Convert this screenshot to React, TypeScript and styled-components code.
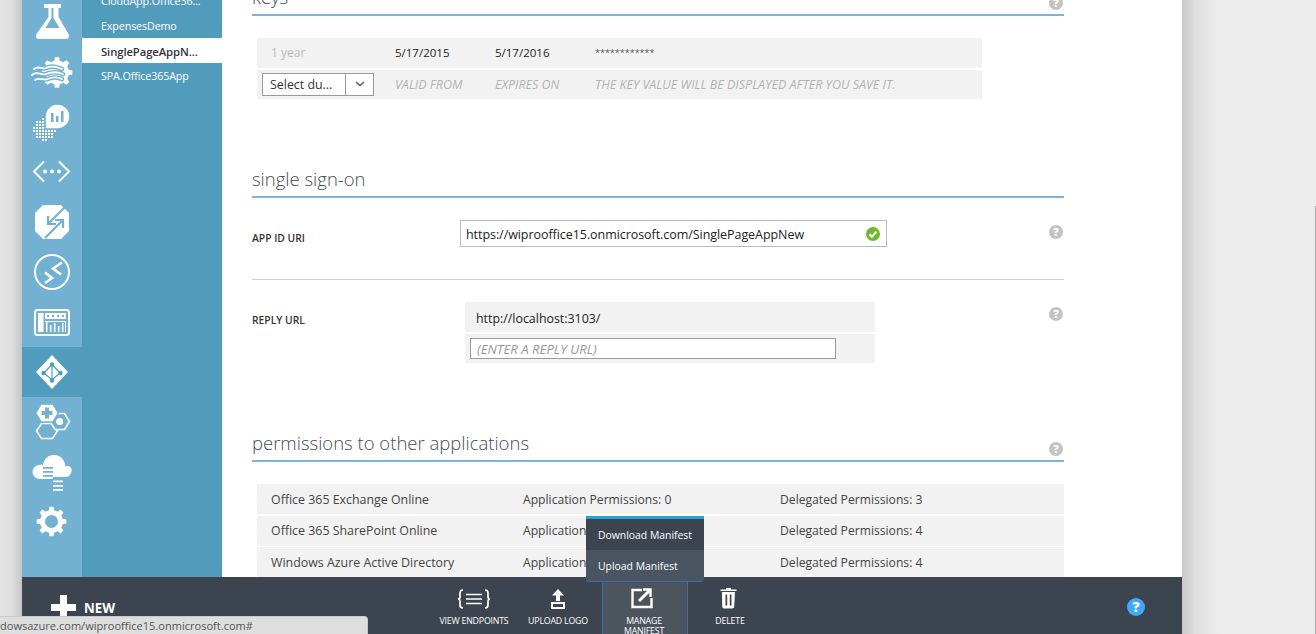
import styled, { createGlobalStyle } from "styled-components";

const GlobalStyle = createGlobalStyle`
html, body {
  margin: 0;
  padding: 0;
  background: #ececec;
}
* {
  box-sizing: border-box;
}
`

const gearPath = (cx: number, cy: number, outer: number, inner: number, hole: number, teeth = 8) => {
    let d = ""
    for (let i = 0; i < teeth; i++) {
        const step = (Math.PI * 2) / teeth
        const a = i * step - Math.PI / 2
        const pts = [
            [inner, a - step * 0.3],
            [outer, a - step * 0.17],
            [outer, a + step * 0.17],
            [inner, a + step * 0.3],
        ]
        pts.forEach(([r, t], j) => {
            const x = (cx + r * Math.cos(t)).toFixed(2)
            const y = (cy + r * Math.sin(t)).toFixed(2)
            d += `${i === 0 && j === 0 ? "M" : "L"}${x} ${y}`
        })
    }
    d += "Z"
    if (hole > 0) {
        d += ` M${cx - hole} ${cy}a${hole} ${hole} 0 1 0 ${hole * 2} 0a${hole} ${hole} 0 1 0 ${-hole * 2} 0Z`
    }
    return d
}

const Svg = (props: any) => (
    <svg width="50" height="50" viewBox="0 0 50 50" fill="#fff" {...props} />
)

const FlaskIcon = () => (
    <Svg>
        <path fillRule="evenodd" d="M17 7h17v4h-2.500v9l10 17q2 5-3 5H12.500q-5 0-3-5l12-17v-9H17z M24.500 11v10l-6 10h14l-6-10V11z" />
    </Svg>
)

const wavePath = "M5 28c5-5 9 1 14-1s10-3 17 0M7 22c5-4 8 1 12-1s9-2 16 1M8 33c5-3 9 1 13-1s9-2 14 0"

const WavesIcon = () => (
    <Svg>
        <path d={gearPath(30, 25.5, 15.5, 12, 0)} />
        <g fill="none" strokeLinecap="round">
            <path d={wavePath} stroke="#72b1d2" strokeWidth="4.6" />
            <path d={wavePath} stroke="#fff" strokeWidth="1.8" />
        </g>
    </Svg>
)

const dots: number[][] = []
for (let x = 6; x <= 28; x += 3) {
    for (let y = 21; y <= 43; y += 3) {
        if ((x - 16.5) ** 2 + (y - 31.5) ** 2 <= 125) dots.push([x, y])
    }
}

const AnalyticsIcon = () => (
    <Svg>
        {dots.map(([x, y]) => <rect key={`${x}-${y}`} x={x} y={y} width="2" height="2" />)}
        <path d="M30.500 7a12.500 12.500 0 1 1 0 25H18V19.500A12.500 12.500 0 0 1 30.500 7z" stroke="#72b1d2" strokeWidth="1.5" />
        <path fill="#72b1d2" d="M24 16h2.500v9H24zM29 19h2.500v6H29zM34 14h2.500v11H34z" />
    </Svg>
)

const CodeIcon = () => (
    <Svg>
        <path d="M17 14.500L7 24.500l10 10M32 14.500l10 10-10 10" fill="none" stroke="#fff" strokeWidth="2" />
        <circle cx="18" cy="24.500" r="2" />
        <circle cx="25" cy="24.500" r="2" />
        <circle cx="32" cy="24.500" r="2" />
    </Svg>
)

const TrafficIcon = () => (
    <Svg>
        <path d="M16 8h18l8 8v18l-8 8H16l-8-8V16z" />
        <g fill="none" stroke="#72b1d2" strokeWidth="2.200">
            <path d="M21 27l17-17M21 19v8h8" />
            <path d="M36 23L18 41M28 23h8v8" />
        </g>
    </Svg>
)

const RemoteIcon = () => (
    <Svg>
        <circle cx="25" cy="25" r="17" fill="none" stroke="#fff" strokeWidth="2" />
        <path d="M18 25.500l7 5.500-7 5M35 15.500l-9 6 8 6" fill="none" stroke="#fff" strokeWidth="2.600" />
    </Svg>
)

const PanelIcon = () => (
    <Svg>
        <rect x="8" y="13" width="34" height="25" rx="2.500" fill="none" stroke="#fff" strokeWidth="2" />
        <rect x="11" y="16" width="5.500" height="19" />
        <rect x="18" y="16" width="21" height="6" />
        <path fill="#72b1d2" d="M20 18h2v2h-2zM25 18h2v2h-2zM30 18h2v2h-2zM35 18h2v2h-2z" />
        <path d="M18 24h21v1H18zM19 25h1.500v10H19zM23 28h1.500v7H23zM27 26h1.500v9H27zM31 29h1.500v6H31zM35 26h1.500v9H35zM38 25h1v10h-1z" />
    </Svg>
)

const DirectoryIcon = () => (
    <Svg>
        <path d="M25 8l16 17-16 17L9 25z" />
        <g fill="none" stroke="#519bbd" strokeWidth="1.200">
            <path d="M25 17.500L17 26l8 7 8-7zM25 17.500V33" />
        </g>
        <g fill="#519bbd">
            <circle cx="25" cy="17.500" r="2.200" />
            <circle cx="16.500" cy="26" r="2.200" />
            <circle cx="33.500" cy="26" r="2.200" />
            <circle cx="25" cy="33.500" r="2.200" />
        </g>
    </Svg>
)

const HexIcon = () => (
    <Svg>
        <path d="M14.500 26.500h11l5 7.500-5 7.500h-11l-5-7.500z" fill="none" stroke="#fff" strokeWidth="1.600" />
        <path d="M28 16.500h9.500l5 8-5 8H28l-5-8z" fill="#72b1d2" stroke="#fff" strokeWidth="1.600" />
        <circle cx="32.700" cy="24.500" r="3.500" />
        <path d="M14 7h12l5.500 9L26 25H14L8.500 16z" stroke="#72b1d2" strokeWidth="1.500" />
        <path d="M18 10.500h4v3.500h3.500v4H22v3.500h-4V18h-3.500v-4H18z" fill="#72b1d2" />
    </Svg>
)

const CloudIcon = () => (
    <Svg>
        <path d="M13 32a7 7 0 0 1-1-14q2-1 4 0c1-7 6-10 11-10 7 0 11 5 11.500 12q2-2 4-.500c2 1 2.500 3 2 5s-2.500 5.500-5 5.500H26v2z" />
        <path fill="#72b1d2" d="M16 20h10v1.800H16zM16 24h10v1.800H16zM16 28h10v1.800H16z" />
        <path d="M26 33.500h10v1.800H26zM26 38h10v1.800H26zM26 42h10v1.800H26z" />
    </Svg>
)

const GearIcon = () => (
    <Svg>
        <path fillRule="evenodd" d={gearPath(24.5, 24.5, 15, 11.5, 6.5)} />
    </Svg>
)

const railItems = [
    { id: "flask", Icon: FlaskIcon },
    { id: "waves", Icon: WavesIcon },
    { id: "analytics", Icon: AnalyticsIcon },
    { id: "code", Icon: CodeIcon },
    { id: "traffic", Icon: TrafficIcon },
    { id: "remote", Icon: RemoteIcon },
    { id: "panel", Icon: PanelIcon },
    { id: "directory", Icon: DirectoryIcon, active: true },
    { id: "hex", Icon: HexIcon },
    { id: "cloud", Icon: CloudIcon },
    { id: "gear", Icon: GearIcon },
]

const subItems = ["CloudApp.Office36...", "ExpensesDemo", "SinglePageAppN...", "SPA.Office365App"]

const permissions = [
    ["Office 365 Exchange Online", "Application Permissions: 0", "Delegated Permissions: 3"],
    ["Office 365 SharePoint Online", "Application Permissions: 0", "Delegated Permissions: 4"],
    ["Windows Azure Active Directory", "Application Permissions: 0", "Delegated Permissions: 4"],
]

const App = () => {
    return (
        <Page>
            <GlobalStyle />
            <LeftGutter />
            <Shell>
                <Upper>
                    <Rail>
                        {railItems.map(({ id, Icon, active }) => (
                            <RailItem key={id} $active={active}><Icon /></RailItem>
                        ))}
                    </Rail>
                    <SubNav>
                        {subItems.map((item, i) => (
                            <SubItem key={item} $active={i === 2}>{item}</SubItem>
                        ))}
                    </SubNav>
                    <Content>
                        <SectionHead>
                            <HeadTitle>keys</HeadTitle>
                            <Help>?</Help>
                        </SectionHead>
                        <KeysTable>
                            <KeysRow>
                                <Muted>1 year</Muted>
                                <Cell>5/17/2015</Cell>
                                <Cell>5/17/2016</Cell>
                                <Stars>************</Stars>
                            </KeysRow>
                            <KeysRow>
                                <SelectBox>
                                    <SelectText>Select du...</SelectText>
                                    <SelectArrow>
                                        <svg width="10" height="6" viewBox="0 0 10 6"><path d="M1 1l4 3.500L9 1" fill="none" stroke="#555" strokeWidth="1.500" /></svg>
                                    </SelectArrow>
                                </SelectBox>
                                <Hint>VALID FROM</Hint>
                                <Hint>EXPIRES ON</Hint>
                                <Hint>THE KEY VALUE WILL BE DISPLAYED AFTER YOU SAVE IT.</Hint>
                            </KeysRow>
                        </KeysTable>

                        <SectionHead $gap={59}>
                            <HeadTitle>single sign-on</HeadTitle>
                        </SectionHead>
                        <FormRow>
                            <FormLabel $width={208}>APP ID URI</FormLabel>
                            <UriField>
                                <span>https://wiprooffice15.onmicrosoft.com/SinglePageAppNew</span>
                                <svg width="14" height="14" viewBox="0 0 14 14">
                                    <circle cx="7" cy="7" r="7" fill="#6fb92d" />
                                    <path d="M3.500 7.200l2.500 2.500 4.500-5" fill="none" stroke="#fff" strokeWidth="2" />
                                </svg>
                            </UriField>
                            <FormHelp>?</FormHelp>
                        </FormRow>
                        <Divider />
                        <FormRow>
                            <FormLabel $width={213}>REPLY URL</FormLabel>
                            <ReplyTable>
                                <ReplyRow>http://localhost:3103/</ReplyRow>
                                <ReplyInputRow>
                                    <ReplyInput>(ENTER A REPLY URL)</ReplyInput>
                                </ReplyInputRow>
                            </ReplyTable>
                            <FormHelp>?</FormHelp>
                        </FormRow>

                        <SectionHead $gap={59}>
                            <HeadTitle>permissions to other applications</HeadTitle>
                            <Help>?</Help>
                        </SectionHead>
                        <PermTable>
                            {permissions.map((row) => (
                                <PermRow key={row[0]}>
                                    {row.map((cell) => <PermCell key={cell}>{cell}</PermCell>)}
                                </PermRow>
                            ))}
                        </PermTable>
                    </Content>
                </Upper>
                <CommandBar>
                    <NewButton>
                        <svg width="25" height="25" viewBox="0 0 25 25"><path d="M9 0h7v9h9v7h-9v9H9v-9H0V9h9z" fill="#fff" /></svg>
                        <NewLabel>NEW</NewLabel>
                    </NewButton>
                    <Command>
                        <svg width="34" height="22" viewBox="0 0 34 22" fill="none" stroke="#fff" strokeWidth="1.700">
                            <path d="M6 2Q3 2 3 5v3.500Q3 11 1 11q2 0 2 2.500V17q0 3 3 3M28 2q3 0 3 3v3.500q0 2.500 2 2.500-2 0-2 2.500V17q0 3-3 3" />
                            <path d="M9 6.500h16M9 11h16M9 15.500h16" />
                        </svg>
                        <CommandLabel>VIEW ENDPOINTS</CommandLabel>
                    </Command>
                    <Command>
                        <svg width="34" height="22" viewBox="0 0 34 22" fill="#fff">
                            <path d="M17 1l6 6.500h-4V13h-4V7.500h-4z" />
                            <path fillRule="evenodd" d="M10 14h14v7H10zM12 16v3h10v-3z" />
                        </svg>
                        <CommandLabel>UPLOAD LOGO</CommandLabel>
                    </Command>
                    <ManageCommand>
                        <svg width="34" height="22" viewBox="0 0 34 22" fill="none" stroke="#fff" strokeWidth="2.400">
                            <path d="M14 2H4.500v17h19v-9" />
                            <path d="M11 13L21 3" strokeWidth="3" />
                            <path d="M15 1.500h7.500v7.500" />
                        </svg>
                        <ManageLabel>MANAGE MANIFEST</ManageLabel>
                        <Popup>
                            <PopupItem>Download Manifest</PopupItem>
                            <PopupItem $alt>Upload Manifest</PopupItem>
                        </Popup>
                    </ManageCommand>
                    <Command>
                        <svg width="34" height="22" viewBox="0 0 34 22" fill="#fff">
                            <g transform="translate(-1.500 0)">
                                <path d="M14.500 0h5v1.500H25V3H9V1.500h5.500z" />
                                <path fillRule="evenodd" d="M10.500 4h13l-.8 14.500q0 2-2 2h-8q-2 0-2-2zM14 6.500v11h1.700v-11zM18.300 6.500v11H20v-11z" />
                            </g>
                        </svg>
                        <CommandLabel>DELETE</CommandLabel>
                    </Command>
                    <BarHelp>?</BarHelp>
                </CommandBar>
            </Shell>
            <RightGutter>
                <ScrollLine />
            </RightGutter>
            <StatusTip>dowsazure.com/wiprooffice15.onmicrosoft.com#</StatusTip>
        </Page>
    )
}

const Page = styled.div`
position: relative;
display: flex;
width: 1316px;
height: 634px;
overflow: hidden;
font-family: "Open Sans", "Liberation Sans", sans-serif;
`

const LeftGutter = styled.div`
width: 22px;
background: linear-gradient(to right, #e2e2e2 0%, #dedede 55%, #c6c6c6 100%);
`

const RightGutter = styled.div`
flex: 1;
display: flex;
justify-content: flex-end;
padding-top: 206px;
background: linear-gradient(to right, #c8c8c8 0, #dedede 12px, #ececec 36px);
`

const ScrollLine = styled.div`
width: 1px;
background: #a8a8a8;
`

const Shell = styled.div`
width: 1160px;
height: 634px;
display: flex;
flex-direction: column;
`

const Upper = styled.div`
display: flex;
height: 577px;
overflow: hidden;
background: #fff;
`

const Rail = styled.div`
width: 60px;
height: 580px;
margin-top: -3px;
background: #72b1d2;
flex-shrink: 0;
`

const RailItem = styled.div<{ $active?: boolean }>`
height: 50px;
display: flex;
align-items: center;
justify-content: center;
background: ${(p) => (p.$active ? "#519bbd" : "transparent")};
`

const SubNav = styled.div`
width: 140px;
flex-shrink: 0;
margin-top: -12px;
background: #519bbd;
height: 589px;
`

const SubItem = styled.div<{ $active?: boolean }>`
height: 25px;
padding-left: 19px;
line-height: 27px;
font-size: ${(p) => (p.$active ? 11.3 : 10.7)}px;
letter-spacing: -0.1px;
font-weight: ${(p) => (p.$active ? 600 : 400)};
color: ${(p) => (p.$active ? "#32323c" : "#fff")};
background: ${(p) => (p.$active ? "#fff" : "transparent")};
white-space: nowrap;
`

const Content = styled.div`
flex: 1;
margin-top: -24px;
padding-left: 30px;
`

const SectionHead = styled.div<{ $gap?: number }>`
width: 812px;
height: 40px;
margin-top: ${(p) => p.$gap || 0}px;
display: flex;
align-items: flex-end;
justify-content: space-between;
border-bottom: 2px solid #7fb3de;
`

const HeadTitle = styled.h2`
margin: 0;
font-size: 18.5px;
line-height: 26px;
padding-bottom: 4px;
font-weight: 300;
color: #444c55;
`

const Help = styled.span`
width: 14px;
height: 14px;
margin: 0 1px 4px 0;
border-radius: 50%;
background: #c3c3c3;
color: #fff;
font-size: 11px;
font-weight: 800;
line-height: 14px;
text-align: center;
`

const FormHelp = styled(Help)`
margin: 5px 0 0 auto;
margin-right: 1px;
flex-shrink: 0;
`

const KeysTable = styled.div`
width: 725px;
margin: 22px 0 0 5px;
display: flex;
flex-direction: column;
gap: 2px;
`

const KeysRow = styled.div`
height: 29.5px;
display: grid;
grid-template-columns: 138px 100px 100px 1fr;
align-items: center;
background: #f2f2f2;
font-size: 11.5px;
`

const Cell = styled.span`
color: #222;
`

const Muted = styled.span`
padding-left: 14px;
font-size: 12px;
color: #bbb;
`

const Stars = styled.span`
color: #555;
font-size: 9px;
`

const Hint = styled.span`
color: #b3b3b3;
font-style: italic;
font-size: 12.5px;
white-space: nowrap;
`

const SelectBox = styled.div`
width: 112px;
height: 23px;
margin-left: 5px;
display: flex;
background: #fff;
border: 1px solid #9a9a9a;
`

const SelectText = styled.span`
flex: 1;
padding-left: 7px;
line-height: 21px;
font-size: 12.4px;
color: #333;
white-space: nowrap;
`

const SelectArrow = styled.span`
width: 28px;
display: flex;
align-items: center;
justify-content: center;
border-left: 1px solid #9a9a9a;
`

const FormRow = styled.div`
width: 812px;
margin-top: 22px;
display: flex;
align-items: flex-start;
`

const FormLabel = styled.div<{ $width: number }>`
width: ${(p) => p.$width}px;
flex-shrink: 0;
padding-top: 11px;
font-size: 10.3px;
line-height: 14px;
font-weight: 600;
color: #333;
`

const UriField = styled.div`
width: 427px;
height: 27px;
display: flex;
align-items: center;
justify-content: space-between;
padding: 1px 6px 0 5px;
border: 1px solid #bbb;
font-size: 12.5px;
letter-spacing: -0.06px;
color: #222;
`

const Divider = styled.div`
width: 812px;
height: 1px;
margin-top: 32px;
background: #d0d0d0;
`

const ReplyTable = styled.div`
width: 410px;
display: flex;
flex-direction: column;
gap: 2px;
`

const ReplyRow = styled.div`
height: 30px;
padding-left: 11px;
line-height: 33px;
background: #f2f2f2;
font-size: 12.4px;
color: #222;
`

const ReplyInputRow = styled.div`
height: 29px;
padding: 4px 0 0 5px;
background: #f2f2f2;
`

const ReplyInput = styled.div`
width: 366px;
height: 21px;
padding-left: 6px;
line-height: 21px;
background: #fff;
border: 1px solid #9a9a9a;
font-size: 13.2px;
font-style: italic;
color: #999;
`

const PermTable = styled.div`
width: 807px;
margin: 22px 0 0 5px;
display: flex;
flex-direction: column;
gap: 1.5px;
`

const PermRow = styled.div`
height: 30px;
display: grid;
grid-template-columns: 266px 257px 1fr;
align-items: center;
background: #f2f2f2;
font-size: 12.15px;
color: #444;
`

const PermCell = styled.span`
white-space: nowrap;
&:first-child {
  padding-left: 14px;
  font-size: 12.4px;
}
`

const CommandBar = styled.div`
height: 57px;
flex-shrink: 0;
display: flex;
padding-left: 29px;
background: #3c4450;
`

const NewButton = styled.div`
width: 381px;
display: flex;
align-items: flex-start;
padding-top: 18px;
gap: 8px;
`

const NewLabel = styled.span`
font-size: 13.3px;
line-height: 26px;
font-weight: 700;
color: #fff;
`

const Command = styled.div`
position: relative;
width: 84px;
flex-shrink: 0;
display: flex;
flex-direction: column;
align-items: center;
padding-top: 11px;
`

const ManageCommand = styled(Command)`
width: 86px;
height: 60px;
margin: 4px 0 0 2px;
padding-top: 7px;
background: #4c545e;
border-left: 1px solid #3d6cb0;
border-right: 1px solid #3d6cb0;
`

const CommandLabel = styled.span`
margin-top: 6px;
width: 76px;
font-size: 8.8px;
line-height: 10px;
letter-spacing: -0.2px;
text-align: center;
color: #fff;
`

const ManageLabel = styled(CommandLabel)`
margin: 6px 2px 0 0;
`

const Popup = styled.div`
position: absolute;
left: -17px;
bottom: 100%;
width: 118px;
display: flex;
flex-direction: column;
border-top: 3px solid #1ea3de;
border-radius: 0 0 3px 3px;
overflow: hidden;
box-shadow: 0 1px 0 #3d6cb0;
`

const PopupItem = styled.div<{ $alt?: boolean }>`
height: 31px;
padding-left: 12px;
line-height: 33px;
font-size: 10.4px;
color: #fff;
white-space: nowrap;
background: ${(p) => (p.$alt ? "#4a5561" : "#3c4450")};
`

const BarHelp = styled.span`
width: 18px;
height: 18px;
margin: 21px 37px 0 auto;
border-radius: 50%;
background: #3fa9f5;
color: #fff;
font-size: 14px;
line-height: 18px;
font-weight: 800;
text-align: center;
`

const StatusTip = styled.div`
position: absolute;
left: 0;
bottom: 0;
width: 368px;
height: 18px;
background: #dedede;
border-top: 1px solid #c8c8c8;
border-right: 1px solid #c8c8c8;
border-top-right-radius: 4px;
font-size: 11.05px;
line-height: 17px;
color: #555;
white-space: nowrap;
overflow: hidden;
`

export default App
